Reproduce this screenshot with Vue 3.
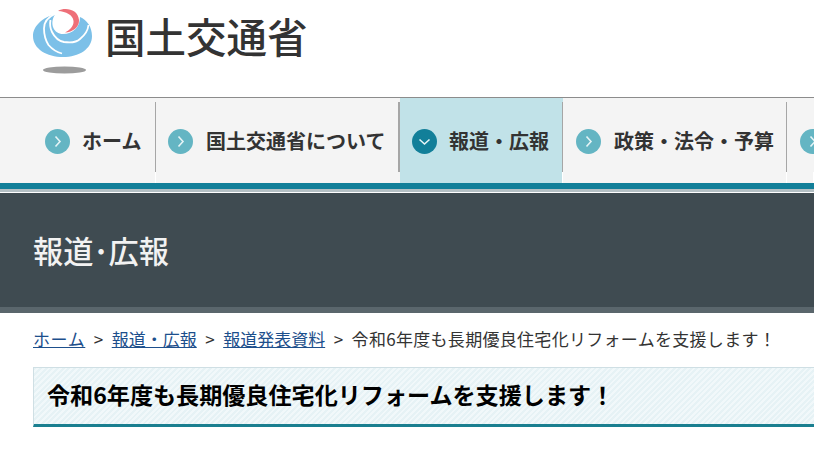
<template>
  <div class="page">
    <header class="site-header">
      <a class="logo">
        <svg class="logo-mark" width="60" height="68" viewBox="0 0 60 68">
          <path d="M22 6.5 C10 9 0 18 0 28 C0 41 14 49 30 49 C46 49 59 41 59 28 C59 19 54 12 47 9 C47 19 40 26 30 26 C21 26 16 16 22 6.5 Z" fill="#7cc0e8" />
          <path d="M22 6 C15 9 11 14 11 20.5 C11 28 13 33 15.5 37 C19 41 23 44 29 45.5" fill="none" stroke="#fff" stroke-width="1.8" />
          <path d="M17.5 12 C16.5 17 17 20 19 24 C22 30 26 33 31 34 C38 35 44 34 47 31 C52 27 55 22 55.5 17" fill="none" stroke="#fff" stroke-width="1.8" />
          <path d="M25 3 C32 -1 45 1 46 12 C46.5 19 40 24 32 24.5 C37 22 41 18 40.5 13 C40 7 33 3.5 25 3 Z" fill="#ee6f78" />
          <ellipse cx="31.5" cy="62" rx="21.5" ry="3.6" fill="#9c9c9c" />
        </svg>
        <span class="logo-text">国土交通省</span>
      </a>
    </header>

    <nav class="global-nav">
      <div
        v-for="item in navItems"
        :key="item.cls"
        class="nav-item"
        :class="[item.cls, { active: item.active }]"
      >
        <div class="nav-inner">
          <svg class="nav-icon" width="25" height="25" viewBox="0 0 25 25">
            <circle cx="12.5" cy="12.5" r="12.5" :fill="item.active ? '#127f99' : '#64b5c3'" />
            <path
              v-if="item.active"
              d="M7.5 10.5 L12.5 15 L17.5 10.5"
              fill="none"
              stroke="#e6f4f6"
              stroke-width="1.6"
            />
            <path v-else d="M10.5 7.5 L15 12.5 L10.5 17.5" fill="none" stroke="#e6f4f6" stroke-width="1.6" />
          </svg>
          <span v-if="item.label" class="nav-label">{{ item.label }}</span>
        </div>
      </div>
    </nav>
    <div class="nav-rule"></div>

    <section class="category-band">
      <p class="category-title">報道･広報</p>
    </section>

    <main class="content">
      <div class="breadcrumb">
        <a href="#">ホーム</a>
        <span class="sep">&gt;</span>
        <a href="#">報道・広報</a>
        <span class="sep">&gt;</span>
        <a href="#">報道発表資料</a>
        <span class="sep">&gt;</span>
        <span class="current">令和6年度も長期優良住宅化リフォームを支援します！</span>
      </div>
      <h1 class="page-title">令和6年度も長期優良住宅化リフォームを支援します！</h1>
    </main>
  </div>
</template>

<script setup>
const navItems = [
  { label: 'ホーム', cls: 'first' },
  { label: '国土交通省について', cls: 'second' },
  { label: '報道・広報', cls: 'third', active: true },
  { label: '政策・法令・予算', cls: 'fourth' },
  { label: '', cls: 'fifth' }
]
</script>

<style>
html,
body {
  margin: 0;
  overflow: hidden;
  background: #fff;
}
</style>

<style scoped>
.page {
  width: 814px;
  height: 467px;
  overflow: hidden;
  font-family: "Noto Sans CJK JP", "Noto Sans", sans-serif;
  color: #333;
}

.site-header {
  height: 97px;
  padding-left: 33px;
  box-sizing: border-box;
}

.logo {
  display: flex;
  align-items: flex-start;
  padding-top: 8px;
}

.logo-mark {
  flex: none;
}

.logo-text {
  margin: 0 0 0 12px;
  font-size: 40.5px;
  line-height: 56px;
  font-weight: 500;
  color: #333;
  white-space: nowrap;
}

.global-nav {
  display: flex;
  height: 85px;
  border-top: 1px solid #8c8c8c;
  background: #f4f4f4;
  overflow: hidden;
}

.nav-item {
  flex: none;
  box-sizing: border-box;
  height: 85px;
  padding-top: 4px;
}

.nav-item::after {
  content: "";
  display: block;
  height: 11px;
  border-right: 1px solid #fff;
}

.nav-inner {
  display: flex;
  align-items: center;
  height: 70px;
  gap: 12px;
  box-sizing: border-box;
  padding-top: 8px;
  border-right: 1px solid #a6a6a6;
}

.nav-item.first {
  width: 156px;
}

.nav-item.first .nav-inner {
  padding-left: 45px;
}

.nav-item.second {
  width: 244px;
}

.nav-item.second::after {
  border-right: none;
}

.nav-item.second .nav-inner {
  padding-left: 12px;
  gap: 13px;
  border-right: 2px solid #a6a6a6;
}

.nav-item.third {
  width: 163px;
  background: #c1e2e8;
}

.nav-item.third .nav-inner {
  padding-left: 12px;
}

.nav-item.fourth {
  width: 224px;
}

.nav-item.fourth .nav-inner {
  padding-left: 13px;
  gap: 13px;
}

.nav-item.fifth {
  width: 27px;
}

.nav-item.fifth .nav-inner {
  padding-left: 13px;
  border-right: none;
}

.nav-icon {
  flex: none;
}

.nav-label {
  font-size: 20px;
  line-height: 28px;
  font-weight: 700;
  color: #333;
  white-space: nowrap;
}

.nav-rule {
  height: 6px;
  background: #127f99;
  border-bottom: 3px solid #b4c0c4;
}

.category-band {
  height: 120px;
  margin-top: 1px;
  box-sizing: border-box;
  padding: 39px 0 0 33px;
  background: #3f4b51;
  border-bottom: 6px solid #5a666c;
}

.category-title {
  margin: 0;
  font-size: 30.2px;
  line-height: 36px;
  font-weight: 500;
  color: #f2f2f2;
}

.content {
  padding: 0 0 0 33px;
}

.breadcrumb {
  display: flex;
  align-items: center;
  height: 54px;
  padding-bottom: 4px;
  box-sizing: border-box;
  font-size: 17px;
  font-weight: 400;
  color: #333;
  white-space: nowrap;
}

.breadcrumb a {
  color: #1d4f8c;
  text-decoration: underline;
}

.breadcrumb a:first-child {
  letter-spacing: 0.6px;
}

.sep {
  margin: 0 8.5px;
}

.current {
  letter-spacing: 0.3px;
}

.page-title {
  height: 60px;
  margin: 0;
  box-sizing: border-box;
  padding-left: 13px;
  font-size: 23.1px;
  line-height: 52px;
  font-weight: 700;
  color: #000;
  white-space: nowrap;
  background: repeating-linear-gradient(135deg, #e6f2f5 0 2px, #f1f8fa 2px 4px);
  border-top: 1px solid #cfdfe4;
  border-left: 1px solid #cfdfe4;
  border-bottom: 3px solid #1a7f90;
}
</style>
